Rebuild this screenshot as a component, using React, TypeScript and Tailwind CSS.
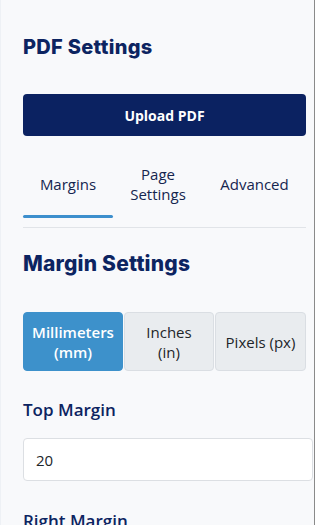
import { useState } from "react";

const tabs = [
  { id: "margins", label: "Margins" },
  { id: "page", label: "Page Settings" },
  { id: "advanced", label: "Advanced" },
];

const units = [
  { id: "mm", label: "Millimeters (mm)" },
  { id: "in", label: "Inches (in)" },
  { id: "px", label: "Pixels (px)" },
];

export default function App() {
  const [tab, setTab] = useState("margins");
  const [unit, setUnit] = useState("mm");
  const [top, setTop] = useState("20");

  return (
    <div className="h-[525px] w-[316px] overflow-hidden bg-white font-['Open_Sans',sans-serif]">
      <aside className="h-full w-[315px] border-r border-[#8a8a8a] border-l border-l-[#eef1f5] bg-[#f8f9fb] pl-[22px] pr-[9px]">
        {/* Header */}
        <h1 className="pt-[34px] text-[20px] font-extrabold leading-[26px] tracking-[0.3px] text-[#0c2461] font-['Inter',sans-serif]">
          PDF Settings
        </h1>

        <button className="mt-[34px] h-[42px] w-[283px] rounded-[4px] bg-[#0b2261] text-[14px] font-bold text-white">
          Upload PDF
        </button>

        {/* Tabs */}
        <div className="mt-[24px] flex w-[283px] border-b border-[#e1e4e8]">
          {tabs.map((t) => (
            <button
              key={t.id}
              onClick={() => setTab(t.id)}
              className={
                "relative flex h-[67px] items-start justify-center pt-[3px] text-[15px] leading-[20px] text-[#15254f] " +
                (t.id === "margins" ? "w-[90px]" : t.id === "page" ? "w-[90px]" : "w-[103px]")
              }
            >
              <span className={"flex h-[42px] items-center text-center " + (t.id === "page" ? "w-[70px]" : "")}>
                {t.label}
              </span>
              {tab === t.id && (
                <span className="absolute bottom-[9px] left-0 h-[3px] w-full rounded-full bg-[#3d8fcd]" />
              )}
            </button>
          ))}
        </div>

        <h2 className="mt-[22px] text-[21px] font-extrabold leading-[28px] tracking-[0.2px] text-[#0c2461] font-['Inter',sans-serif]">
          Margin Settings
        </h2>

        {/* Units */}
        <div className="mt-[34px] flex w-[283px] gap-[1px]">
          {units.map((u) => (
            <button
              key={u.id}
              onClick={() => setUnit(u.id)}
              className={
                "flex h-[59px] items-center justify-center rounded-[4px] border text-center text-[15px] leading-[20px] " +
                (u.id === "mm" ? "w-[100px] px-[6px] " : u.id === "in" ? "w-[90px] px-[14px] " : "w-[91px] px-[6px] ") +
                (unit === u.id
                  ? "border-[#3d91cb] bg-[#3d91cb] font-semibold text-white"
                  : "border-[#dadee3] bg-[#e9ecef] text-[#212529]")
              }
            >
              {u.label}
            </button>
          ))}
        </div>

        {/* Top margin */}
        <label className="mt-[27px] block text-[17px] font-semibold leading-[24px] text-[#0c2461]">
          Top Margin
        </label>
        <input
          value={top}
          onChange={(e) => setTop(e.target.value)}
          className="mt-[16px] block h-[43px] w-[290px] rounded-[4px] border border-[#dcdfe3] bg-white px-[12px] text-[15px] text-[#212529] outline-none"
        />

        <label className="mt-[28px] block text-[17px] font-semibold leading-[24px] text-[#0c2461]">
          Right Margin
        </label>
      </aside>
    </div>
  );
}
